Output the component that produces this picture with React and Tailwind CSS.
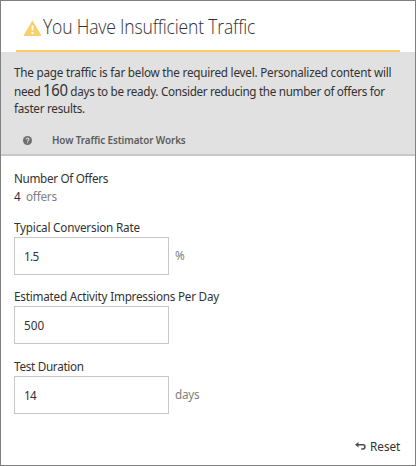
import React from "react";

function Narrow({ className = "tracking-[-0.27px]", children }) {
  return <span className={`inline-block origin-left scale-x-90 whitespace-nowrap ${className}`}>{children}</span>;
}

function Field({ label, labelClass, value, valueClass, unit, className }) {
  return (
    <div className={className}>
      <label className="block h-[19px] leading-[19px]">
        <Narrow className={labelClass}>{label}</Narrow>
      </label>
      <div className="flex h-[38px] items-center">
        <div className="flex h-[38px] w-[155px] items-center border border-[#c8c8c8] bg-white pt-px pl-[9px]">
          <Narrow className={valueClass}>{value}</Narrow>
        </div>
        {unit && (
          <span className="pl-[6px] text-[#808080]">
            <Narrow>{unit}</Narrow>
          </span>
        )}
      </div>
    </div>
  );
}

export default function App() {
  return (
    <div className="flex h-[466px] w-[416px] flex-col border border-[#808080] bg-white font-['Noto_Sans','Open_Sans',sans-serif] text-[13px] text-[#323232]">
      <header className="mx-[15px] flex h-[51px] shrink-0 items-start border-b-2 border-[#fccd66] pl-[7px]">
        <svg className="mt-[19px] h-[16px] w-[19px] shrink-0" viewBox="0 0 18 16">
          <path d="M9 0.5 L17.7 15 Q18 16 17 16 H1 Q0 16 0.3 15 Z" fill="#f9d06e" />
          <path d="M8 5.5h2l-.3 5h-1.4z M8 12h2v2H8z" fill="#fff" />
        </svg>
        <h1 className="mt-[12px] pl-px font-['Open_Sans'] text-[19.5px] leading-[28px] font-[350]">
          <Narrow className="tracking-[-0.2px]">You Have Insufficient Traffic</Narrow>
        </h1>
      </header>
      <section className="h-[104px] shrink-0 border-b-2 border-[#c8c8c8] bg-[#e1e1e1] pl-[13px]">
        <div className="pt-[11px]">
          <p className="h-[18px] leading-[18px]">
            <Narrow className="tracking-[-0.25px]">The page traffic is far below the required level. Personalized content will</Narrow>
          </p>
          <p className="h-[20px] leading-[20px]">
            <Narrow className="tracking-[-0.35px]">
              need <span className="text-[16.5px] leading-none">160</span> days to be ready. Consider reducing the number of offers for
            </Narrow>
          </p>
          <p className="h-[16px] leading-[14px]">
            <Narrow className="tracking-[-0.3px]">faster results.</Narrow>
          </p>
        </div>
        <div className="mt-[14px] flex h-[18px] items-center pl-[9px]">
          <svg className="h-[9px] w-[9px]" viewBox="0 0 9 9">
            <circle cx="4.5" cy="4.5" r="4.5" fill="#6e6e6e" />
            <path d="M3 3.3Q3.2 2 4.6 2T6 3.3Q6 4 5.2 4.4T4.5 5.5M4.5 6.3v1" fill="none" stroke="#e1e1e1" strokeWidth="1.1" />
          </svg>
          <span className="pl-[20px] text-[11px] font-semibold text-[#5c5c5c]">
            <Narrow className="tracking-[-0.13px]">How Traffic Estimator Works</Narrow>
          </span>
        </div>
      </section>
      <main className="flex flex-col pl-[13px]">
        <div className="pt-[13px]">
          <div className="h-[19px] leading-[18px]">
            <Narrow className="tracking-[-0.35px]">Number Of Offers</Narrow>
          </div>
          <div className="flex h-[18px] gap-[5px] leading-[16px]">
            <Narrow>4</Narrow>
            <Narrow className="tracking-[-0.25px] text-[#808080]">offers</Narrow>
          </div>
        </div>
        <Field className="mt-[12px]" labelClass="tracking-[-0.22px]" label="Typical Conversion Rate" valueClass="tracking-[-0.8px]" value="1.5" unit="%" />
        <Field className="mt-[12px]" labelClass="tracking-[-0.25px]" label="Estimated Activity Impressions Per Day" valueClass="tracking-[0px]" value="500" />
        <Field className="mt-[13px]" labelClass="tracking-[-0.33px]" label="Test Duration" valueClass="tracking-[-0.8px]" value="14" unit="days" />
      </main>
      <footer className="mt-[24px] flex h-[18px] items-center justify-end pr-[11px]">
        <svg className="mb-[2px] h-[8px] w-[11px]" viewBox="0 0 11 8">
          <path d="M0 2.8L3.5 0v2H8Q10.7 2 10.7 4.8T8 7.8H6.2V6.2H8Q9.1 6 9.1 4.8T8 3.6H3.5v2z" fill="#505050" />
        </svg>
        <span className="pl-[4px]">
          <Narrow className="tracking-[0px]">Reset</Narrow>
        </span>
      </footer>
    </div>
  );
}
